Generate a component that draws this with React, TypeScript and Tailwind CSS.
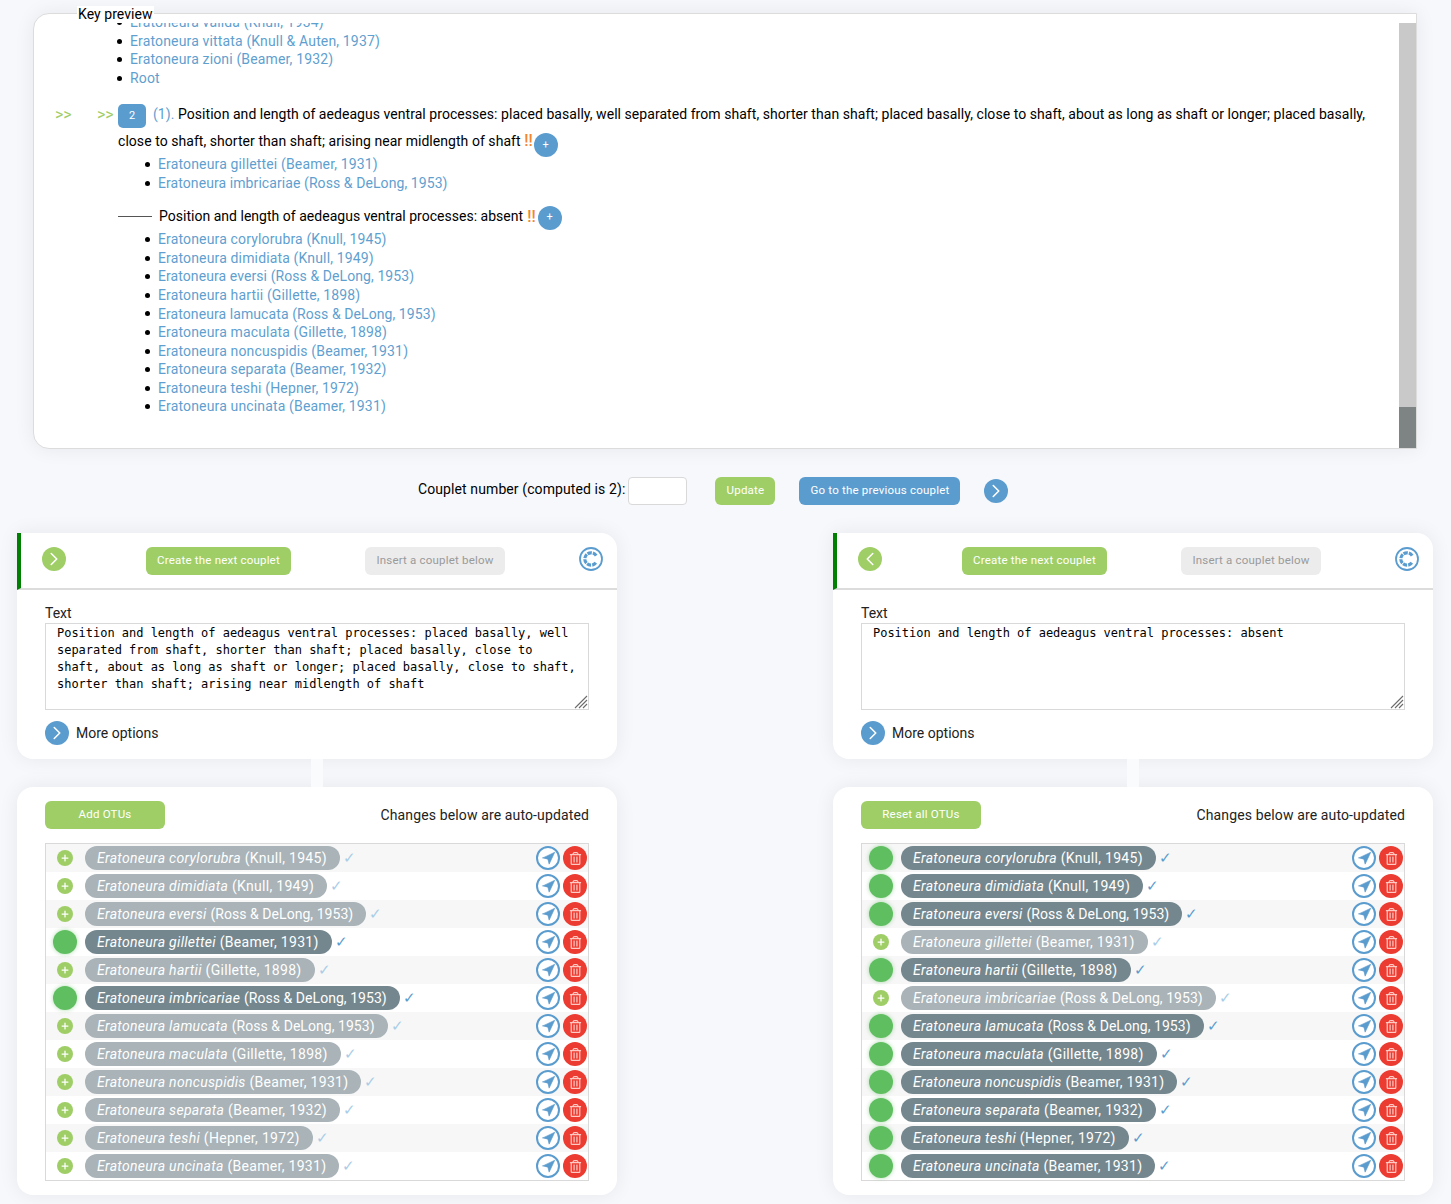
import { ChevronLeft, ChevronRight, Navigation, Plus } from "lucide-react";
import { FaRegTrashAlt } from "react-icons/fa";

type Otu = { genus: string; author: string };

const OTUS: Otu[] = [
  { genus: "Eratoneura corylorubra", author: "(Knull, 1945)" },
  { genus: "Eratoneura dimidiata", author: "(Knull, 1949)" },
  { genus: "Eratoneura eversi", author: "(Ross & DeLong, 1953)" },
  { genus: "Eratoneura gillettei", author: "(Beamer, 1931)" },
  { genus: "Eratoneura hartii", author: "(Gillette, 1898)" },
  { genus: "Eratoneura imbricariae", author: "(Ross & DeLong, 1953)" },
  { genus: "Eratoneura lamucata", author: "(Ross & DeLong, 1953)" },
  { genus: "Eratoneura maculata", author: "(Gillette, 1898)" },
  { genus: "Eratoneura noncuspidis", author: "(Beamer, 1931)" },
  { genus: "Eratoneura separata", author: "(Beamer, 1932)" },
  { genus: "Eratoneura teshi", author: "(Hepner, 1972)" },
  { genus: "Eratoneura uncinata", author: "(Beamer, 1931)" },
];

const LEFT_ACTIVE = [3, 5];
const RIGHT_ACTIVE = [0, 1, 2, 4, 6, 7, 8, 9, 10, 11];

const SECOND_LEAD = OTUS.filter((_, i) => RIGHT_ACTIVE.includes(i));

function TaxonList({ items, className }: { items: string[]; className: string }) {
  return (
    <ul className={className}>
      {items.map((t) => (
        <li key={t} className="flex h-[18.56px] items-center">
          <span className="mr-[8px] h-[5px] w-[5px] rounded-full bg-black" />
          <span className={`text-[#5f9fd0] ${t.includes("Ross") ? "tracking-[0.08px]" : "tracking-[0.15px]"}`}>{t}</span>
        </li>
      ))}
    </ul>
  );
}

function ResetIcon() {
  return (
    <svg viewBox="0 0 24 24" className="h-6 w-6">
      <circle cx="12" cy="12" r="11" fill="white" stroke="#5b9ccf" strokeWidth="1.8" />
      <path
        d="M17.2 8.6A6.2 6.2 0 1 0 17.2 15.4"
        fill="none"
        stroke="#5b9ccf"
        strokeWidth="3.2"
        strokeDasharray="4.2 1"
      />
    </svg>
  );
}

function ResizeHandle() {
  return (
    <svg viewBox="0 0 15 15" className="absolute bottom-px right-px h-[15px] w-[15px] bg-white">
      <path d="M14 2 2 14M14 6 6 14M14 10 10 14" fill="none" stroke="#6b6b6b" strokeWidth="1.1" />
    </svg>
  );
}

function Lead({ otuTitle, active, back, text }: { otuTitle: string; active: number[]; back?: boolean; text: string }) {
  const Chevron = back ? ChevronLeft : ChevronRight;
  return (
    <div className="w-[600px]">
      <div className="rounded-tr-2xl rounded-b-2xl bg-white shadow-[0_0_20px_rgba(0,0,0,0.07)]">
        <div className="flex h-[57px] items-center rounded-tr-2xl border-b-2 border-l-4 border-b-[#dcdcdc] border-l-[#008000] pl-[21px] pr-[14px]">
          <span className="mb-1 flex h-6 w-6 items-center justify-center rounded-full bg-[#9fce67] text-white">
            <Chevron size={22} strokeWidth={1.7} />
          </span>
          <button className="ml-20 h-7 w-[145px] rounded-md bg-[#9fce67] text-[11.5px] tracking-[0.2px] text-white">
            Create the next couplet
          </button>
          <button className="ml-[74px] h-7 w-[140px] rounded-md bg-[#ececec] text-[11.5px] tracking-[0.2px] text-[#9a9a9a]">
            Insert a couplet below
          </button>
          <span className="mb-1 ml-auto">
            <ResetIcon />
          </span>
        </div>
        <div className="px-7 pt-[14px] pb-[14px]">
          <div className="text-[14px] leading-[19px] text-[#222]">Text</div>
          <div className="relative">
            <textarea
              readOnly
              defaultValue={text}
              className="block h-[87px] w-full resize-none border border-[#d9d9d9] bg-white px-[11px] py-px font-['DejaVu_Sans_Mono',monospace] text-[12px] leading-[17px] tracking-[-0.02px] text-black outline-none"
            />
            <ResizeHandle />
          </div>
          <div className="mt-[11px] flex items-center">
            <span className="flex h-6 w-6 items-center justify-center rounded-full bg-[#5b9ccf] text-white">
              <ChevronRight size={22} strokeWidth={1.7} />
            </span>
            <span className="ml-[7px] text-[14px] text-[#222]">More options</span>
          </div>
        </div>
      </div>

      <div className="relative z-10 ml-[294px] h-7 w-3 bg-[#fafbfc]" />

      <div className="rounded-2xl bg-white px-7 pt-[14px] pb-[14px] shadow-[0_0_20px_rgba(0,0,0,0.07)]">
        <div className="flex items-center justify-between">
          <button className="h-7 w-[120px] rounded-md bg-[#9fce67] text-[11.5px] tracking-[0.2px] text-white">
            {otuTitle}
          </button>
          <span className="text-[14px] tracking-[0.13px] text-[#222]">Changes below are auto-updated</span>
        </div>
        <div className="mt-[14px] border border-[#d9d9d9]">
          {OTUS.map((o, i) => {
            const on = active.includes(i);
            return (
              <div key={o.genus} className="flex h-7 items-center odd:bg-[#f7f7f7]">
                <span className="mr-px flex w-[38px] shrink-0 justify-center">
                  {on ? (
                    <span className="h-6 w-6 rounded-full bg-[#5fbe60] shadow-[0_0_4px_rgba(95,190,96,0.5)]" />
                  ) : (
                    <span className="flex h-4 w-4 items-center justify-center rounded-full bg-[#9fce67] text-white">
                      <Plus size={10} strokeWidth={3} />
                    </span>
                  )}
                </span>
                <span
                  className={`flex h-6 items-center rounded-full px-[13px] text-[14px] tracking-[0.3px] text-white ${on ? "bg-[#75878e]" : "bg-[#a9b3b8]"}`}
                >
                  <i className="-ml-px">{o.genus}</i>&nbsp;
                  <span className={o.author.includes("Ross") ? "tracking-[0.05px]" : ""}>{o.author}</span>
                </span>
                <span className={`ml-[3px] text-[15px] ${on ? "text-[#5b9ccf]" : "text-[#a9cde8]"}`}>✓</span>
                <span className="ml-auto flex items-center gap-[3px] pr-px">
                  <span className="flex h-6 w-6 items-center justify-center rounded-full border-2 border-[#5b9ccf] bg-white text-[#5b9ccf]">
                    <Navigation size={15} fill="#5b9ccf" strokeWidth={1} />
                  </span>
                  <span className="flex h-6 w-6 items-center justify-center rounded-full bg-[#ec3b30] text-[#ffc9c4]">
                    <FaRegTrashAlt size={13} />
                  </span>
                </span>
              </div>
            );
          })}
        </div>
      </div>
    </div>
  );
}

export default function App() {
  return (
    <div className="h-[1204px] overflow-hidden bg-[#f7f8fc] pt-[13px] font-['Roboto',sans-serif] text-[14px] text-black">
      <div className="relative ml-[33px] h-[436px] w-[1384px] rounded-l-2xl border border-[#dcdcdc] bg-white shadow-[0_0_20px_rgba(0,0,0,0.07)]">
        <span className="absolute -top-[8px] left-[43px] z-10 bg-white px-px leading-[16px] tracking-[0.05px]">Key preview</span>
        <div className="flex h-full pt-[9px]">
          <div className="flex min-w-0 flex-1 flex-col justify-end overflow-hidden pb-[32px]">
            <TaxonList
              className="ml-[83px]"
              items={[
                "Eratoneura valida (Knull, 1934)",
                "Eratoneura vittata (Knull & Auten, 1937)",
                "Eratoneura zioni (Beamer, 1932)",
                "Root",
              ]}
            />
            <div className="mt-[14px] flex">
              <span className="ml-[21px] w-[42px] text-[16px] leading-[27px] text-[#9fce67]">&gt;&gt;</span>
              <span className="w-[21px] text-[16px] leading-[27px] text-[#9fce67]">&gt;&gt;</span>
              <div className="h-[54px] w-[1256px] leading-[27px] tracking-[0.05px]">
                <span className="mr-[7px] inline-flex h-6 w-7 items-center justify-center rounded-[5px] bg-[#5b9ccf] align-middle text-[11px] text-white">
                  2
                </span>
                <span className="text-[#5f9fd0]">(1). </span>
                Position and length of aedeagus ventral processes: placed basally, well separated from shaft, shorter than shaft; placed basally, close to shaft, about as long as shaft or longer; placed basally, close to shaft, shorter than shaft; arising near midlength of shaft{" "}
                <span className="text-[16px] leading-none font-medium text-[#f5842c]">!!</span>
                <span className="ml-px inline-flex h-6 w-6 translate-y-[2px] items-center justify-center rounded-full bg-[#5b9ccf] align-middle text-[11px] text-white">
                  +
                </span>
              </div>
            </div>
            <TaxonList
              className="ml-[111px]"
              items={["Eratoneura gillettei (Beamer, 1931)", "Eratoneura imbricariae (Ross & DeLong, 1953)"]}
            />
            <div className="ml-[84px] mt-[12px] flex h-6 items-center">
              <span className="h-px w-[34px] bg-[#555]" />
              <span className="ml-[7px] tracking-[0.02px]">Position and length of aedeagus ventral processes: absent</span>
              <span className="ml-1 text-[16px] font-medium text-[#f5842c]">!!</span>
              <span className="ml-[2px] flex h-6 w-6 translate-y-px items-center justify-center rounded-full bg-[#5b9ccf] text-[11px] text-white">
                +
              </span>
            </div>
            <TaxonList
              className="ml-[111px] mt-[2px]"
              items={SECOND_LEAD.map((o) => `${o.genus} ${o.author}`)}
            />
          </div>
          <div className="flex w-[17px] shrink-0 flex-col justify-end bg-[#c9c9c9]">
            <div className="h-[41px] bg-[#7e8484]" />
          </div>
        </div>
      </div>

      <div className="ml-[418px] mt-[28px] flex h-7 items-center">
        <span className="mb-1 tracking-[0.1px]">Couplet number (computed is 2):</span>
        <span className="ml-[3px] h-7 w-[59px] rounded-sm border border-[#d9d9d9] bg-white" />
        <button className="ml-7 h-7 w-[60px] rounded-md bg-[#9fce67] text-[11.5px] tracking-[0.2px] text-white">
          Update
        </button>
        <button className="ml-6 h-7 w-[161px] rounded-md bg-[#5b9ccf] text-[11.5px] tracking-[0.2px] text-white">
          Go to the previous couplet
        </button>
        <span className="ml-6 flex h-6 w-6 items-center justify-center rounded-full bg-[#5b9ccf] text-white">
          <ChevronRight size={22} strokeWidth={1.7} />
        </span>
      </div>

      <div className="mt-[28px] flex justify-between pl-[17px] pr-[18px]">
        <Lead
          otuTitle="Add OTUs"
          active={LEFT_ACTIVE}
          text="Position and length of aedeagus ventral processes: placed basally, well separated from shaft, shorter than shaft; placed basally, close to shaft, about as long as shaft or longer; placed basally, close to shaft, shorter than shaft; arising near midlength of shaft"
        />
        <Lead
          otuTitle="Reset all OTUs"
          active={RIGHT_ACTIVE}
          back
          text="Position and length of aedeagus ventral processes: absent"
        />
      </div>
    </div>
  );
}
